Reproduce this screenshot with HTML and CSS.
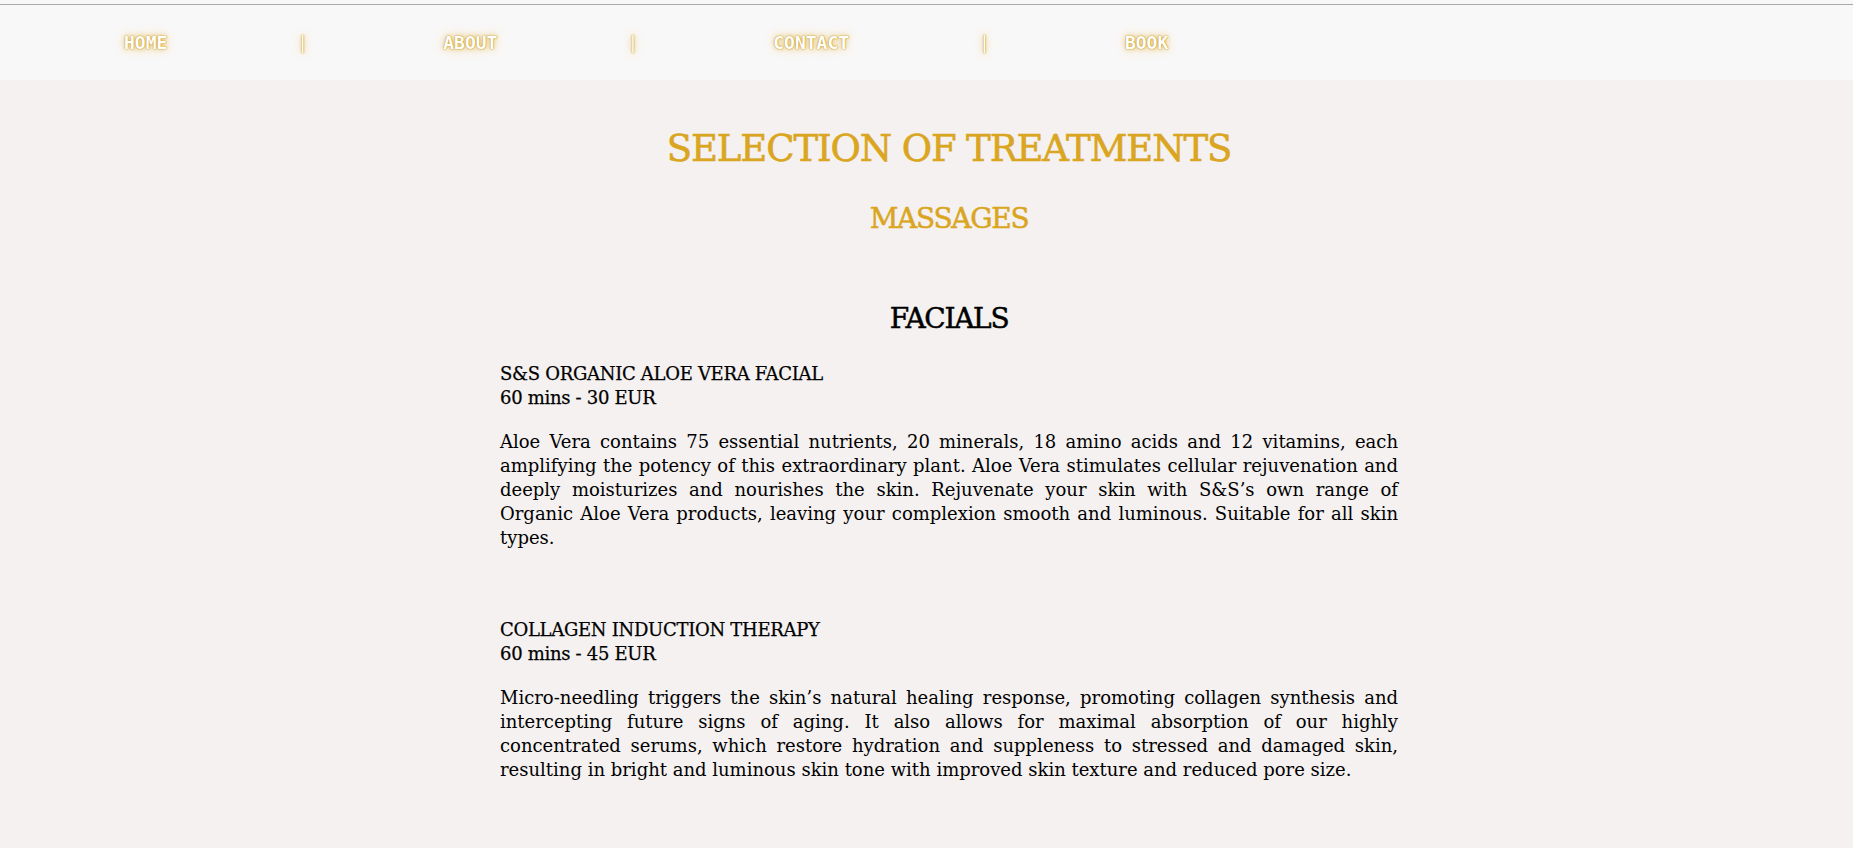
FILE: index.html
```html
<!DOCTYPE html>
<html lang="en">
<head>
<meta charset="utf-8">
<title>Selection of Treatments</title>
<link rel="stylesheet" href="styles.css">
</head>
<body>
<header class="topbar">
  <nav class="nav">
    <a class="nav-link" href="#">HOME</a>
    <span class="nav-sep">|</span>
    <a class="nav-link" href="#">ABOUT</a>
    <span class="nav-sep">|</span>
    <a class="nav-link" href="#">CONTACT</a>
    <span class="nav-sep">|</span>
    <a class="nav-link" href="#">BOOK</a>
  </nav>
</header>
<main class="content">
  <h1 class="page-title">SELECTION OF TREATMENTS</h1>
  <h2 class="category category-gold">MASSAGES</h2>
  <h2 class="category category-facials">FACIALS</h2>
  <article class="treatment">
    <h3 class="treatment-name">S&amp;S ORGANIC ALOE VERA FACIAL<br>60 mins - 30 EUR</h3>
    <p class="treatment-desc">Aloe Vera contains 75 essential nutrients, 20 minerals, 18 amino acids and 12 vitamins, each amplifying the potency of this extraordinary plant. Aloe Vera stimulates cellular rejuvenation and deeply moisturizes and nourishes the skin. Rejuvenate your skin with S&amp;S’s own range of Organic Aloe Vera products, leaving your complexion smooth and luminous. Suitable for all skin types.</p>
  </article>
  <article class="treatment treatment-next">
    <h3 class="treatment-name">COLLAGEN INDUCTION THERAPY<br>60 mins - 45 EUR</h3>
    <p class="treatment-desc">Micro-needling triggers the skin’s natural healing response, promoting collagen synthesis and intercepting future signs of aging. It also allows for maximal absorption of our highly concentrated serums, which restore hydration and suppleness to stressed and damaged skin, resulting in bright and luminous skin tone with improved skin texture and reduced pore size.</p>
  </article>
</main>
</body>
</html>
```
FILE: styles.css
```css
html, body {
  margin: 0;
  padding: 0;
}
body {
  background: #f4f1f0 linear-gradient(#f9f8f8, #f9f8f8) top left / 100% 4px no-repeat;
  font-family: "DejaVu Serif", "Liberation Serif", serif;
  color: #000;
  min-height: 848px;
}
.topbar {
  margin-top: 4px;
  border-top: 1px solid #a9a9a9;
  background: #f9f8f8;
  height: 75px;
}
.nav {
  height: 100%;
  display: flex;
  align-items: center;
  padding-left: 124px;
  font-family: "DejaVu Sans Mono", "Liberation Mono", monospace;
  font-size: 18px;
  font-weight: bold;
  color: #fff;
  text-shadow: 0 0 1px #b8860b, 0 0 2px #d9a42a, 0 0 6px rgba(218, 165, 32, 0.6), 0 0 12px rgba(240, 190, 60, 0.35);
}
.nav-link {
  color: #fff;
  text-decoration: none;
}
.nav-sep {
  font-weight: normal;
  margin: 0 135px 0 130px;
}
.content {
  width: 898px;
  margin-left: 500px;
  padding-bottom: 40px;
}
.page-title {
  margin: 46px 0 0;
  font-size: 37px;
  line-height: 46px;
  letter-spacing: -1.1px;
  font-weight: normal;
  -webkit-text-stroke: 0.6px currentColor;
  text-align: center;
  color: #daa520;
}
.category {
  margin: 0;
  font-size: 28px;
  line-height: 36px;
  letter-spacing: -1.3px;
  font-weight: normal;
  -webkit-text-stroke: 0.5px currentColor;
  text-align: center;
}
.category-gold {
  margin-top: 29px;
  color: #daa520;
}
.category-facials {
  margin-top: 64px;
  color: #000;
}
.treatment {
  margin-top: 25px;
}
.treatment-next {
  margin-top: 68px;
}
.treatment-name {
  margin: 0;
  font-size: 18px;
  line-height: 24px;
  letter-spacing: -0.3px;
  font-weight: normal;
  -webkit-text-stroke: 0.25px currentColor;
}
.treatment-desc {
  margin: 20px 0 0;
  font-size: 18px;
  line-height: 24px;
  text-align: justify;
}
```
